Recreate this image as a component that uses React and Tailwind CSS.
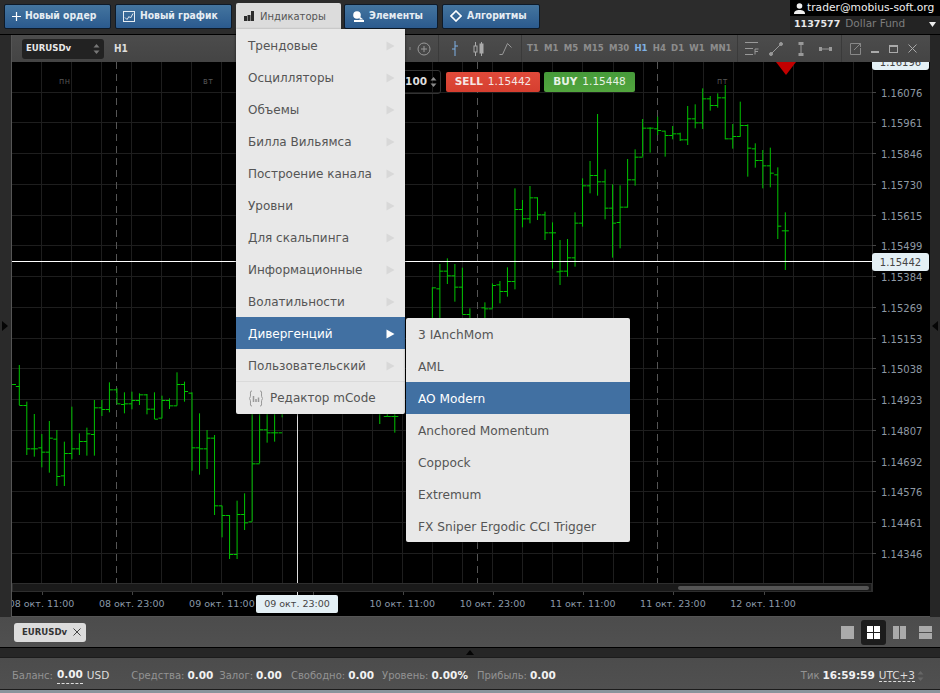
import React from 'react';

const FONT = "font-['DejaVu_Sans',sans-serif]";
const NARROW = "font-['DejaVu_Sans_Condensed','DejaVu_Sans',sans-serif]";

// [high, low, open tick, close tick], read off the chart at 3x, y = base + v / 3
const barsLeft = [
  [15, 135, 78, 135], [125, 285, 135, 265], [162, 290, 265, 265], [222, 322, 262, 275], [183, 338, 275, 233],
  [210, 378, 236, 348], [245, 378, 346, 279], [140, 298, 279, 265], [220, 285, 265, 243], [203, 287, 243, 220],
  [120, 287, 222, 142], [120, 168, 142, 147], [67, 157, 147, 88], [85, 130, 88, 130], [97, 160, 132, 130],
  [95, 148, 130, 120], [100, 135, 120, 103], [102, 163, 103, 146], [97, 177, 146, 176], [107, 175, 173, 120],
  [115, 147, 120, 136], [37, 137, 136, 72], [65, 125, 72, 93], [97, 332, 98, 262], [160, 344, 262, 265],
  [210, 327, 265, 233], [225, 465, 233, 436], [437, 532, 436, 465], [465, 597, 465, 582], [422, 597, 582, 462],
  [400, 510, 462, 487], [120, 484, 484, 310], [120, 310, 310, 208], [120, 248, 208, 217], [120, 245, 217, 217],
  [120, 172, 217, 150],
];

const barsMiddle = [
  { i: 48, h: 100, l: 192 }, { i: 49, h: 100, l: 170, o: 168, c: 168 }, { i: 50, h: 100, l: 218, o: 168, c: 168 },
];

const barsRight = [
  [682, 800, null, 682], [612, 800, 685, 632], [595, 672, 632, 646], [612, 725, 646, 680], [623, 762, 680, 762],
  [745, 800, 762, null], null, [727, 800, 742, 745], [670, 745, 745, 675], [663, 730, 673, 693],
  [622, 710, 693, 663], [385, 688, 663, 447], [420, 502, 447, 475], [378, 490, 475, 412], [412, 480, 412, 463],
  [455, 540, 463, 517], [487, 626, 517, 517], [540, 675, 634, 632], [537, 650, 632, 592], [457, 620, 592, 488],
  [355, 500, 488, 376], [303, 400, 376, 345], [162, 407, 345, 364], [328, 478, 364, 443], [373, 593, 443, 488],
  [376, 565, 486, 440], [297, 443, 440, 358], [268, 377, 358, 290], [177, 290, 290, 203], [202, 278, 203, 203],
  [170, 225, 205, 210], [212, 290, 212, 225], [198, 238, 225, 220], [218, 243, 220, 238], [138, 255, 238, 175],
  [133, 205, 175, 187], [85, 207, 187, 115], [108, 152, 115, 135], [100, 143, 135, 112], [75, 238, 112, 235],
  [192, 266, 235, 228], [125, 230, 228, 195], [193, 350, 195, 263], [250, 323, 265, 300], [270, 385, 300, 316],
  [263, 382, 316, 338], [322, 537, 343, 497], [457, 630, 511, 511],
];

const barX = (i) => 19.3 + 7.51 * i;

const Bar = ({ i, base, d }) => {
  const x = barX(i);
  const y = (v) => base + v / 3;
  return (
    <g stroke="#00c400" strokeWidth="1" fill="none">
      <line x1={x} x2={x} y1={y(d[0])} y2={y(d[1])} />
      {d[2] != null && <line x1={x - 3.5} x2={x} y1={y(d[2]) + 0.5} y2={y(d[2]) + 0.5} />}
      {d[3] != null && <line x1={x} x2={x + 3.5} y1={y(d[3]) + 0.5} y2={y(d[3]) + 0.5} />}
    </g>
  );
};

const prices = ['1.16076', '1.15961', '1.15846', '1.15730', '1.15615', '1.15499', '1.15384', '1.15269', '1.15153', '1.15038', '1.14923', '1.14807', '1.14692', '1.14576', '1.14461', '1.14346'];
const times = ['08 окт. 11:00', '08 окт. 23:00', '09 окт. 11:00', null, '10 окт. 11:00', '10 окт. 23:00', '11 окт. 11:00', '11 окт. 23:00', '12 окт. 11:00'];
const mainItems = ['Трендовые', 'Осцилляторы', 'Объемы', 'Билла Вильямса', 'Построение канала', 'Уровни', 'Для скальпинга', 'Информационные', 'Волатильности', 'Дивергенций', 'Пользовательский'];
const subItems = ['3 IAnchMom', 'AML', 'AO Modern', 'Anchored Momentum', 'Coppock', 'Extremum', 'FX Sniper Ergodic CCI Trigger'];
const frames = ['T1', 'M1', 'M5', 'M15', 'M30', 'H1', 'H4', 'D1', 'W1', 'MN1'];

const TopButton = ({ icon, children, className }) => (
  <button className={`flex h-[25px] items-center rounded-[2px] border border-[#0e1a28] bg-gradient-to-b from-[#44759f] to-[#2b5a8e] text-[10.3px] font-bold text-[#e6edf3] ${NARROW} ${className}`}>
    {icon}
    <span>{children}</span>
  </button>
);

const Stepper = ({ color = '#8a8a8a' }) => (
  <svg width="7" height="12" viewBox="0 0 7 12" fill={color}>
    <polygon points="3.5,1 6.5,4.5 0.5,4.5" />
    <polygon points="3.5,11 6.5,7.5 0.5,7.5" />
  </svg>
);

const Arrow = ({ color }) => (
  <svg width="9" height="10" viewBox="0 0 9 10" fill={color}>
    <polygon points="0.5,0.5 8.5,5 0.5,9.5" />
  </svg>
);

const Sep = () => <div className="h-full w-px bg-[#3a3a3a]" />;

const Label = ({ children }) => <span className="text-[10px] text-[#939393]">{children}</span>;
const Val = ({ children, className = '' }) => <b className={`ml-[3px] text-[#f2f2f2] ${className}`}>{children}</b>;

export default function App() {
  return (
    <div className={`relative flex h-[693px] w-[940px] flex-col overflow-hidden bg-[#2b2b2b] ${FONT}`}>
      {/* Top bar */}
      <div className="flex h-[35px] shrink-0 border-b border-black bg-[#2c2c2c]">
        <div className="flex flex-1 items-start gap-[4px] pl-[4px] pt-[3.5px]">
          <TopButton className="w-[107px] gap-[4px] pl-[7px]" icon={
            <svg width="9" height="9" viewBox="0 0 9 9" stroke="#fff" strokeWidth="1.2"><path d="M4.5 0v9M0 4.5h9" /></svg>
          }>Новый ордер</TopButton>
          <TopButton className="w-[117px] gap-[5px] pl-[7px]" icon={
            <svg width="12" height="11" viewBox="0 0 12 11" fill="none" stroke="#e6edf3"><rect x="0.5" y="0.5" width="11" height="10" /><path d="M2 6.500l2 2 2-3 1.500 1.500L10 2.500" /></svg>
          }>Новый график</TopButton>
          <div className="-mt-[1px] flex h-[27px] w-[105px] items-center gap-[6px] rounded-t-[2px] bg-[#dcdcdc] pl-[8px] text-[10px] text-[#555]">
            <svg width="10" height="10" viewBox="0 0 10 10" fill="#2c2c2c"><rect x="0" y="5" width="3" height="5" /><rect x="3.500" y="4" width="3" height="6" /><rect x="7" y="0" width="3" height="10" /></svg>
            <span>Индикаторы</span>
          </div>
          <TopButton className="-ml-[1px] w-[94px] gap-[4px] pl-[7px]" icon={
            <svg width="13" height="11" viewBox="0 0 13 11" fill="#fff"><circle cx="5" cy="4" r="3.800" /><path d="M2 9h10v2H2zM7.500 5.500l4 3h-4z" /></svg>
          }>Элементы</TopButton>
          <TopButton className="w-[98px] gap-[5px] pl-[7px]" icon={
            <svg width="12" height="12" viewBox="0 0 12 12" fill="none" stroke="#fff" strokeWidth="1.600"><path d="M6 1l5 5-5 5-5-5z" /></svg>
          }>Алгоритмы</TopButton>
        </div>
        <div className="w-[150px] bg-[#232323] text-[10.5px]">
          <div className="flex h-[16px] items-center gap-[2px] bg-black pl-[4px] font-medium text-[#f0f0f0]">
            <svg width="11" height="11" viewBox="0 0 11 11" fill="#f0f0f0"><circle cx="5.500" cy="3" r="2.800" /><path d="M0 11c0-3 2-4 5.500-4s5.500 1 5.500 4z" /></svg>
            <span className="text-[10.7px]">trader@mobius-soft.org</span>
          </div>
          <div className="flex h-[16px] items-center pl-[4px] pr-[4px]">
            <b className="text-[9.5px] text-[#e8e8e8]">1137577</b>
            <span className="ml-[5px] text-[#7d7d7d]">Dollar Fund</span>
            <svg className="ml-auto" width="7" height="5" viewBox="0 0 7 5" fill="#eee"><polygon points="0,0 7,0 3.500,5" /></svg>
          </div>
        </div>
      </div>

      {/* Chart area with side gutters */}
      <div className="flex h-[582px] shrink-0">
        <div className="flex w-[12px] shrink-0 items-center border-r border-[#555] bg-[#2a2a2a] pl-[2px]">
          <svg width="6" height="10" viewBox="0 0 6 10" fill="#050505"><polygon points="0,0 6,5 0,10" /></svg>
        </div>
        <div className="flex w-[918px] shrink-0 flex-col">
          {/* Window toolbar */}
          <div className="flex h-[27px] shrink-0 items-center bg-gradient-to-b from-[#4c4c4c] to-[#444] text-[10px]">
            <div className={`ml-[10px] flex h-[20px] w-[82px] items-center justify-between rounded-[3px] bg-[#222] pl-[4px] pr-[4px] text-[9.5px] font-bold text-[#e8e8e8] ${NARROW}`}>
              EURUSDv
              <Stepper color="#777" />
            </div>
            <b className={`ml-[10px] w-[295px] text-[10px] text-[#dedede] ${NARROW}`}>H1</b>
            <span className="h-[3px] w-[2px] bg-[#666]" />
            <svg className="ml-[6px]" width="14" height="14" viewBox="0 0 14 14" fill="none" stroke="#999"><circle cx="7" cy="7" r="6" /><path d="M7 4v6M4 7h6" /></svg>
            <div className="ml-[7px] h-full"><Sep /></div>
            <svg className="ml-[12px]" width="8" height="15" viewBox="0 0 8 15" fill="none" stroke="#7fb0e4"><path d="M4 0v15M1 8h3M4 5h3" /></svg>
            <svg className="ml-[14px]" width="11" height="14" viewBox="0 0 11 14" fill="none" stroke="#aaa"><path d="M2.500 0v14M8.500 0v14" /><rect x="1" y="4" width="3" height="6" fill="#444" /><rect x="7" y="2" width="3" height="9" fill="#aaa" /></svg>
            <svg className="ml-[15px]" width="13" height="13" viewBox="0 0 13 13" fill="none" stroke="#999"><path d="M0.500 12.500l3 0 5-11 4 4" /></svg>
            <div className="ml-[9px] h-full"><Sep /></div>
            <div className={`ml-[5px] flex gap-[5.2px] text-[9.5px] font-bold text-[#8d8d8d] ${NARROW}`}>
              {frames.map((f) => (
                <span key={f} className={f === 'H1' ? 'text-[#7fb0e4]' : ''}>{f}</span>
              ))}
            </div>
            <div className="ml-[6px] h-full"><Sep /></div>
            <svg className="ml-[7px]" width="14" height="13" viewBox="0 0 14 13" fill="none" stroke="#999"><path d="M0 .5h13M0 6.500h8M0 12.500h8" /><path d="M10 12.500V7h3.500M10 9.500h3" /></svg>
            <svg className="ml-[10px]" width="14" height="14" viewBox="0 0 14 14" fill="#999" stroke="#999"><path d="M2 12L12 2" /><circle cx="2" cy="12" r="1.500" /><circle cx="12" cy="2" r="1.500" /></svg>
            <svg className="ml-[15px]" width="6" height="14" viewBox="0 0 6 14" fill="#999" stroke="#999"><path d="M3 1v12" /><rect x="1" y="0.500" width="4" height="2" /><rect x="1" y="11.500" width="4" height="2" /></svg>
            <svg className="ml-[15px]" width="13" height="6" viewBox="0 0 13 6" fill="#999" stroke="#999"><path d="M1 3h11" /><rect x="0.500" y="1.500" width="2" height="3" /><rect x="10.500" y="1.500" width="2" height="3" /></svg>
            <div className="ml-[9px] h-full"><Sep /></div>
            <svg className="ml-[8px]" width="11" height="12" viewBox="0 0 11 12" fill="none" stroke="#888"><path d="M8 .5H.5v11h10V5" /><path d="M4 7l6.500-6.500M7 .5h3.500V4" /></svg>
            <span className="ml-[10px] mt-[7px] h-[2px] w-[8px] bg-[#aaa]" />
            <div className="ml-[10px] h-[8px] w-[9px] border border-t-2 border-[#aaa]" />
            <svg className="ml-[10px]" width="9" height="9" viewBox="0 0 9 9" stroke="#aaa"><path d="M0.500 0.500l8 8M8.500 0.500l-8 8" /></svg>
          </div>

          {/* Chart */}
          <div className="relative h-[555px] overflow-hidden border-b border-[#555] bg-black">
            <svg className="absolute inset-0" width="918" height="555" viewBox="12 62 918 555">
              {Array.from({ length: 28 }, (_, k) => (
                <line key={k} x1={41.5 + Math.round(30.08 * k)} x2={41.5 + Math.round(30.08 * k)} y1="62" y2="592" stroke="#1e1e1e" />
              ))}
              {Array.from({ length: 16 }, (_, k) => (
                <line key={k} x1="12" x2="872" y1={Math.round(91.5 + 30.75 * k) + 0.5} y2={Math.round(91.5 + 30.75 * k) + 0.5} stroke="#1e1e1e" />
              ))}
              {[116.5, 477.5, 657.5].map((x) => (
                <line key={x} x1={x} x2={x} y1="62" y2="583" stroke="#555" strokeDasharray="7 5" />
              ))}
              <line x1="12" x2="16" y1="384.5" y2="384.5" stroke="#00c400" />
              {barsLeft.map((d, i) => <Bar key={i} i={i} base={360} d={d} />)}
              {barsMiddle.map((b) => <Bar key={b.i} i={b.i} base={360} d={[b.h, b.l, b.o, b.c]} />)}
              {barsRight.map((d, i) => d && <Bar key={i} i={i + 55} base={60} d={d} />)}
              <line x1="872.5" x2="872.5" y1="62" y2="592" stroke="#2e2e2e" />
              {prices.map((p, k) => (
                <line key={p} x1="872" x2="876" y1={Math.round(91.5 + 30.75 * k) + 0.5} y2={Math.round(91.5 + 30.75 * k) + 0.5} stroke="#444" />
              ))}
              {times.map((t, k) => (
                <line key={k} x1={42.5 + Math.round(90.2 * k)} x2={42.5 + Math.round(90.2 * k)} y1="592" y2="595" stroke="#444" />
              ))}
              <line x1="12" x2="872" y1="261.5" y2="261.5" stroke="#fff" />
              <line x1="297.5" x2="297.5" y1="62" y2="597" stroke="#ddd" />
              <polygon points="776,62 796,62 786,75" fill="#c20000" />
            </svg>

            {/* Day labels */}
            <span className="absolute left-[47px] top-[14px] text-[8px] tracking-[0.5px] text-[#555]">пн</span>
            <span className="absolute left-[191px] top-[14px] text-[8px] tracking-[0.5px] text-[#555]">вт</span>
            <span className="absolute left-[705px] top-[14px] text-[8px] tracking-[0.5px] text-[#555]">пт</span>

            {/* Order size and trade buttons */}
            <div className="absolute left-[360px] top-[8px] flex h-[24px] w-[69px] items-center justify-end gap-[3px] rounded-[3px] border border-[#333] pr-[3px] text-[10.5px] font-bold text-[#ddd]">
              0.0100
              <Stepper />
            </div>
            <button className="absolute left-[434px] top-[10px] flex h-[20px] w-[94px] items-center justify-center gap-[5px] rounded-[2px] bg-gradient-to-b from-[#e04a3a] to-[#d63f30] text-[10.5px] text-[#f5e6e4]">
              <b>SELL</b> 1.15442
            </button>
            <button className="absolute left-[532px] top-[10px] flex h-[20px] w-[91px] items-center justify-center gap-[5px] rounded-[2px] bg-gradient-to-b from-[#469a3a] to-[#52a53e] text-[10.5px] text-[#e7f2e4]">
              <b>BUY</b> 1.15448
            </button>

            {/* Price axis */}
            {prices.map((p, k) => (
              <span key={p} className="absolute left-[869px] -translate-y-1/2 text-[10px] text-[#8e99a4]" style={{ top: 30.5 + 30.75 * k }}>{p}</span>
            ))}
            <div className="absolute left-[860px] top-[-7px] flex h-[15px] w-[57px] items-center justify-center rounded-b-[3px] bg-[#e4f0f5] text-[10px] text-[#444]">1.16196</div>
            <div className="absolute left-[860px] top-[191px] flex h-[18px] w-[57px] items-center justify-center rounded-[3px] bg-[#e4f0f5] text-[10px] text-[#444]">1.15442</div>

            {/* Scrollbar */}
            <div className="absolute left-0 top-[521px] h-[9px] w-[860px] border border-[#2e2e2e] bg-[#1a1a1a]">
              <div className="absolute left-[665px] top-[2px] h-[4px] w-[191px] rounded-[2px] bg-[#555]" />
            </div>

            {/* Time axis */}
            {times.map((t, k) => t && (
              <span key={t} className="absolute top-[535px] -translate-x-1/2 whitespace-nowrap text-[9.5px] text-[#8a99a8]" style={{ left: 29.5 + 90.2 * k }}>{t}</span>
            ))}
            <div className="absolute left-[244px] top-[533px] flex h-[18px] w-[82px] items-center justify-center rounded-[2px] bg-[#e4f0f5] text-[9.5px] text-[#444]">09 окт. 23:00</div>
          </div>
        </div>
        <div className="flex flex-1 items-center justify-end bg-[#262626] pr-[2px]">
          <svg width="6" height="10" viewBox="0 0 6 10" fill="#050505"><polygon points="6,0 0,5 6,10" /></svg>
        </div>
      </div>

      {/* Tabs */}
      <div className="flex h-[31px] shrink-0 items-center border-b border-black bg-gradient-to-b from-[#4c4c4c] to-[#505050] pl-[14px]">
        <div className={`flex h-[19px] w-[72px] items-center gap-[6px] rounded-[3px] bg-[#dcdcdc] pl-[8px] text-[9.5px] font-bold text-[#333] ${NARROW}`}>
          EURUSDv
          <svg width="8" height="8" viewBox="0 0 8 8" stroke="#444"><path d="M.5.5l7 7M7.500.5l-7 7" /></svg>
        </div>
        <div className="ml-auto flex items-center">
          <div className="h-[13px] w-[13px] bg-[#aaa]" />
          <div className="ml-[7px] flex h-[25px] w-[25px] items-center justify-center rounded-[3px] bg-[#1c1c1c]">
            <div className="grid h-[13px] w-[13px] grid-cols-2 gap-[1px]">
              <i className="bg-white" /><i className="bg-white" /><i className="bg-white" /><i className="bg-white" />
            </div>
          </div>
          <div className="ml-[7px] flex h-[13px] w-[13px] gap-[1px]"><i className="flex-1 bg-[#aaa]" /><i className="flex-1 bg-[#aaa]" /></div>
          <div className="ml-[13px] mr-[8px] flex h-[13px] w-[13px] flex-col gap-[1px]"><i className="flex-1 bg-[#aaa]" /><i className="flex-1 bg-[#aaa]" /></div>
        </div>
      </div>

      {/* Collapse strip */}
      <div className="flex h-[9px] shrink-0 items-center justify-center bg-[#262626]">
        <svg width="8" height="5" viewBox="0 0 8 5" fill="#050505"><polygon points="4,0 8,5 0,5" /></svg>
      </div>

      {/* Status bar */}
      <div className="flex h-[33px] shrink-0 items-center border-y border-[#1c1c1c] bg-gradient-to-b from-[#4c4c4c] to-[#505050] pl-[12px] pt-[4px] text-[10.5px]">
        <Label>Баланс:</Label>
        <Val className="!ml-[4px] border-b border-dashed border-[#ddd]">0.00</Val>
        <span className="ml-[4px] text-[#ddd]">USD</span>
        <span className="ml-[22px]"><Label>Средства:</Label><Val>0.00</Val></span>
        <span className="ml-[6px]"><Label>Залог:</Label><Val>0.00</Val></span>
        <span className="ml-[9px]"><Label>Свободно:</Label><Val>0.00</Val></span>
        <span className="ml-[8px]"><Label>Уровень:</Label><Val>0.00%</Val></span>
        <span className="ml-[9px]"><Label>Прибыль:</Label><Val>0.00</Val></span>
        <span className="ml-auto"><Label>Тик</Label><Val>16:59:59</Val></span>
        <span className="ml-[4px] border-b border-dashed border-[#ddd] leading-[12px] text-[#ddd]">UTC+3</span>
        <span className="ml-[2px] mr-[16px]"><Stepper color="#666" /></span>
      </div>
      <div className="flex-1 bg-[#8a949c]" />

      {/* Indicators menu */}
      <div className="absolute left-[236px] top-[29px] w-[169px] rounded-b-[2px] bg-[#e8e8e8] text-[12px] text-[#555] shadow-[0_1px_3px_rgba(0,0,0,0.6)]">
        {mainItems.map((m) => (
          <div key={m} className={`flex h-[32px] items-center justify-between pl-[12px] pr-[10px] pt-[1px] ${m === 'Дивергенций' ? 'bg-[#4170a2] font-medium text-white' : ''}`}>
            {m}
            <Arrow color={m === 'Дивергенций' ? '#fff' : '#d8d8d8'} />
          </div>
        ))}
        <div className="flex h-[33px] items-center gap-[6px] border-t border-[#dadada] pl-[12px]">
          <svg width="16" height="17" viewBox="0 0 16 17" fill="none" stroke="#999">
            <path d="M4 1C2 1 2.500 2 2.500 5 2.500 7 2 8 1 8.500 2 9 2.500 10 2.500 12 2.500 15 2 16 4 16M12 1c2 0 1.500 1 1.500 4 0 2 .5 3 1.500 3.500-1 .5-1.500 1.500-1.500 3.500 0 3 .5 4-1.500 4" />
            <path d="M5.500 6v6M8 9v3M10.500 7.500V12" strokeWidth="1.500" />
          </svg>
          Редактор mCode
        </div>
      </div>

      {/* Divergence submenu */}
      <div className="absolute left-[406px] top-[318px] w-[224px] rounded-[2px] bg-[#e8e8e8] text-[12.2px] text-[#555] shadow-[0_1px_3px_rgba(0,0,0,0.6)]">
        {subItems.map((s) => (
          <div key={s} className={`flex h-[32px] items-center pl-[12px] pt-[2px] ${s === 'AO Modern' ? 'bg-[#4170a2] font-medium text-white' : ''}`}>{s}</div>
        ))}
      </div>
    </div>
  );
}
